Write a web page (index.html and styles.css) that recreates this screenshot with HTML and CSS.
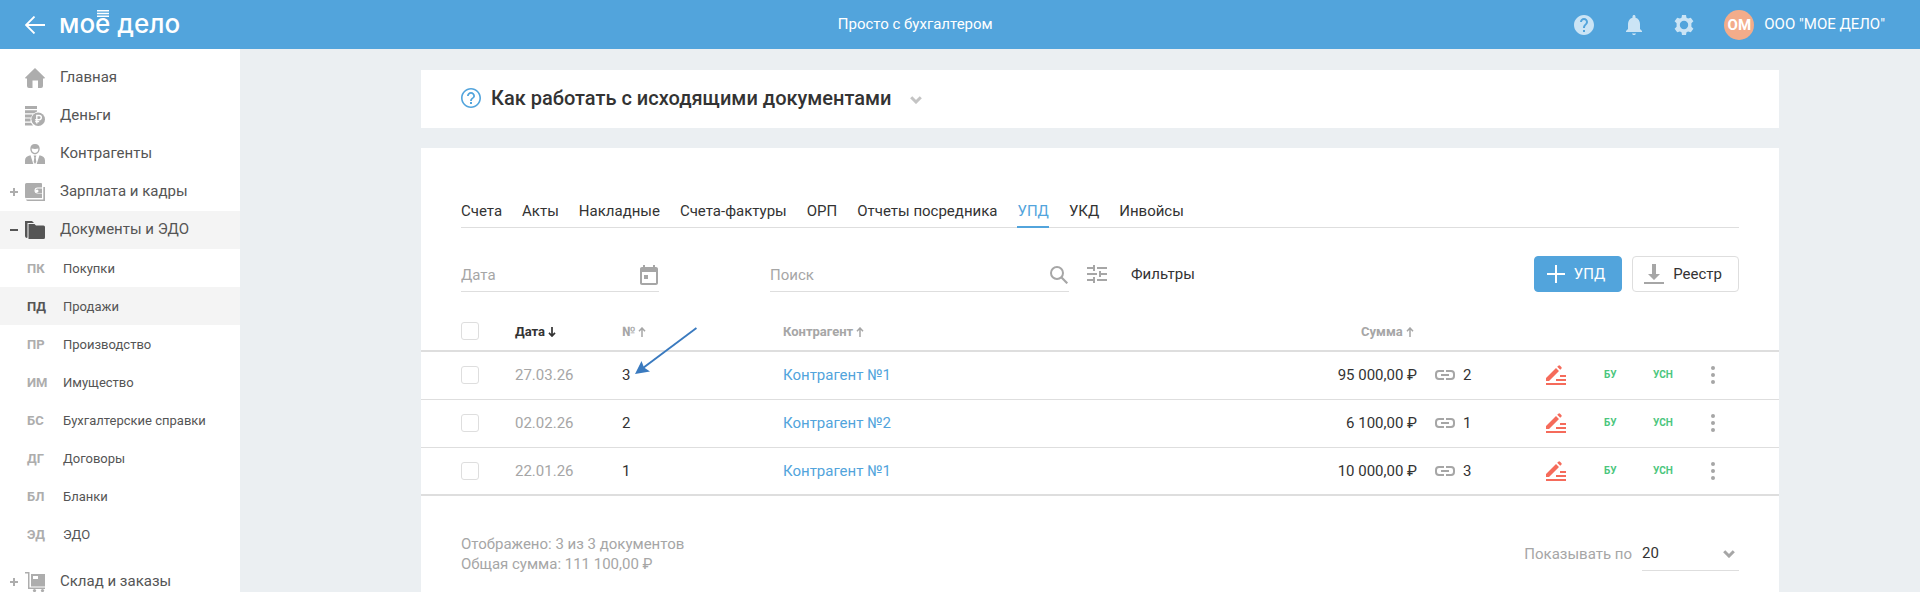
FILE: index.html
```html
<!DOCTYPE html>
<html lang="ru">
<head>
<meta charset="utf-8">
<meta name="viewport" content="width=device-width, initial-scale=1">
<title>Моё дело — УПД</title>
<link rel="stylesheet" href="styles.css">
</head>
<body>
<svg class="sprite" aria-hidden="true">
  <symbol id="i-link" viewBox="0 0 20 10"><path d="M9 1H4a3 3 0 0 0-3 3v2a3 3 0 0 0 3 3h5M11 1h5a3 3 0 0 1 3 3v2a3 3 0 0 1-3 3h-5M6 5h8" fill="none" stroke="currentColor" stroke-width="2"/></symbol>
  <symbol id="i-sign" viewBox="0 0 20 20"><path d="M0 18h20v2H0zM10 14h10v2H10zM14 10h6v2h-6zM0 13 10 3l3 3L3 16H0zM11.200 1.800 12.300.700q.9-.9 1.800 0l1.200 1.200q.9.9 0 1.800l-1.100 1.100z" fill="currentColor"/></symbol>
  <symbol id="i-dots" viewBox="0 0 4 18"><circle cx="2" cy="2" r="2"/><circle cx="2" cy="9" r="2"/><circle cx="2" cy="16" r="2"/></symbol>
  <symbol id="i-up" viewBox="0 0 8 10"><path d="M4 10V1M1 4.200 4 1l3 3.200" fill="none" stroke="currentColor" stroke-width="1.500"/></symbol>
  <symbol id="i-down" viewBox="0 0 8 10"><path d="M4 0v9M1 5.800 4 9l3-3.200" fill="none" stroke="currentColor" stroke-width="1.700"/></symbol>
  <symbol id="i-chevron" viewBox="0 0 12 8"><path d="M1.200 1.200 6 6l4.800-4.800" fill="none" stroke="currentColor" stroke-width="3"/></symbol>
</svg>

<header class="topbar">
  <button class="icon-btn back" type="button" aria-label="Назад"><svg width="20" height="18" viewBox="0 0 20 18"><path d="M20 9H1M9.500.500 1 9l8.500 8.500" fill="none" stroke="#fff" stroke-width="1.800"/></svg></button>
  <a class="logo" href="#" aria-label="Моё дело">мо<span class="logo-yo">е<svg class="logo-bars" width="12" height="7" viewBox="0 0 12 7"><path d="M0 0h12v1.500H0zM0 2.700h12v1.500H0zM0 5.400h12v1.500H0z" fill="#fff"/></svg></span> дело</a>
  <div class="plan">Просто с бухгалтером</div>
  <div class="tools">
    <button class="icon-btn" type="button" aria-label="Помощь"><svg width="20" height="20" viewBox="2 2 20 20"><path d="M12 2C6.480 2 2 6.480 2 12s4.480 10 10 10 10-4.480 10-10S17.520 2 12 2zm1 17h-2v-2h2v2zm2.070-7.750l-.9.920C13.450 12.900 13 13.500 13 15h-2v-.5c0-1.100.450-2.100 1.170-2.830l1.240-1.260c.370-.360.590-.860.590-1.410 0-1.100-.9-2-2-2s-2 .9-2 2H8c0-2.210 1.790-4 4-4s4 1.790 4 4c0 .880-.360 1.680-.930 2.250z"/></svg></button>
    <button class="icon-btn" type="button" aria-label="Уведомления"><svg width="20" height="20" viewBox="2 2 20 20"><path d="M12 22c1.100 0 2-.7 2-1.500h-4c0 .8.900 1.500 2 1.500zm6-6v-5c0-3.070-1.640-5.640-4.500-6.320V3.500c0-.830-.670-1.500-1.500-1.500s-1.500.670-1.500 1.500v1.180C7.630 5.360 6 7.920 6 11v5l-2 2v1h16v-1l-2-2z"/></svg></button>
    <button class="icon-btn" type="button" aria-label="Настройки"><svg width="20" height="20" viewBox="0 0 20 20"><path fill-rule="evenodd" d="M8 0h4l.5 2.700 1.600.9 2.700-.9 2.600 3.600L17.400 8.200v3.600l2 1.900-2.600 3.600-2.700-.9-1.600.9L12 20H8l-.5-2.700-1.600-.9-2.700.9L.600 13.700l2-1.900V8.200L.600 6.300l2.600-3.600 2.700.9 1.600-.9zM10 5.800a4.200 4.200 0 1 0 0 8.400 4.200 4.200 0 0 0 0-8.400z"/></svg></button>
    <button class="account" type="button"><span class="avatar">ОМ</span><span class="account-name">ООО "МОЕ ДЕЛО"</span></button>
  </div>
</header>

<div class="shell">
  <nav class="sidebar" aria-label="Разделы">
    <a class="nav-item" href="#"><span class="toggle"></span><svg width="20" height="20" viewBox="0 0 20 20"><path d="M10 0l10 9.800-.6.600H18V18q0 2-2 2h-3v-7.500H7.500V20H4q-2 0-2-2v-7.600H.600L0 9.800z"/></svg>Главная</a>
    <a class="nav-item" href="#"><span class="toggle"></span><svg width="20" height="20" viewBox="0 0 20 20"><path d="M0 0h12v3H0zM0 4.200h12V5.500L9 7.200H0zM0 8.400h7.500L6 11.400H0zM0 12.600h5.500v3H0zM0 16.800h6L8 19.600H0z"/><circle cx="13.200" cy="13.200" r="6.800"/><path d="M11.800 17.500V9.500h2.400a2 2 0 0 1 0 4.200h-4M10.200 15.600h4" fill="none" stroke="#fff" stroke-width="1.400"/></svg>Деньги</a>
    <a class="nav-item" href="#"><span class="toggle"></span><svg width="20" height="20" viewBox="0 0 20 20"><path fill-rule="evenodd" d="M10 0c3 0 4.700 2 4.700 4.800S12.800 10.300 10 10.300 5.300 7.800 5.300 4.800 7 0 10 0zM6.600 4.600c0 2.600 1.300 4.300 3.400 4.300s3.400-1.700 3.400-4.300c-2.300.5-4.500.5-6.800 0z"/><path d="M0 20v-3.500c0-3 2-4.600 5.500-5.200L8.300 20zM20 20v-3.500c0-3-2-4.600-5.500-5.200L11.700 20zM8.600 11.500h2.800L10.700 13.400 11.300 18 10 20 8.700 18l.6-4.600z"/></svg>Контрагенты</a>
    <a class="nav-item" href="#"><span class="toggle plus"></span><svg width="20" height="20" viewBox="0 0 20 20"><path fill-rule="evenodd" d="M1.500 1h14.500q1 0 1 1v3.500h-4.500q-3 0-3 3t3 3H17v4.500H1.500Q0 16.500 0 15V2.500Q0 1 1.500 1z"/><path fill-rule="evenodd" d="M12.500 6.500H17V11h-4.500q-2 0-2-2.200t2-2.300zM12 7.400a1.500 1.500 0 1 0 0 3 1.500 1.500 0 0 0 0-3z"/><path d="M18.300 5H20v14H3q-1.500 0-2-1.500h17.300z"/></svg>Зарплата и кадры</a>
    <a class="nav-item active" href="#"><span class="toggle minus"></span><svg width="20" height="20" viewBox="0 0 20 20"><path d="M0 1h7l2 2H2.500v14.500L1.500 18Q0 17.500 0 16z"/><path d="M3.500 4H9.500L11 5.500h7.500q1.500 0 1.500 1.500v10.500q0 1.500-1.500 1.500H3.500z"/></svg>Документы и ЭДО</a>
    <div class="subnav">
      <a class="sub-item" href="#"><b>ПК</b>Покупки</a>
      <a class="sub-item active" href="#"><b>ПД</b>Продажи</a>
      <a class="sub-item" href="#"><b>ПР</b>Производство</a>
      <a class="sub-item" href="#"><b>ИМ</b>Имущество</a>
      <a class="sub-item" href="#"><b>БС</b>Бухгалтерские справки</a>
      <a class="sub-item" href="#"><b>ДГ</b>Договоры</a>
      <a class="sub-item" href="#"><b>БЛ</b>Бланки</a>
      <a class="sub-item" href="#"><b>ЭД</b>ЭДО</a>
    </div>
    <a class="nav-item" href="#"><span class="toggle plus"></span><svg width="20" height="20" viewBox="0 0 20 20"><path d="M0 0h4.500v15.500H20V17H3V1.500H0z"/><path fill-rule="evenodd" d="M6 2h14v12.500H6zM8 4v3h5V4z"/><circle cx="9.500" cy="18.500" r="1.600"/><circle cx="17.500" cy="18.500" r="1.600"/></svg>Склад и заказы</a>
  </nav>

  <main class="content">
    <section class="card guide">
      <svg class="guide-icon" width="20" height="20" viewBox="2 2 20 20"><path d="M11 18h2v-2h-2v2zm1-16C6.480 2 2 6.480 2 12s4.480 10 10 10 10-4.480 10-10S17.520 2 12 2zm0 18.400c-4.600 0-8.400-3.800-8.400-8.400S7.400 3.600 12 3.600s8.400 3.800 8.400 8.400-3.800 8.400-8.400 8.400zM12 6c-2.210 0-4 1.790-4 4h1.800c0-1.200 1-2.200 2.200-2.200s2.200 1 2.200 2.200c0 2-3.100 1.750-3.100 5h1.800c0-2.250 3.100-2.500 3.100-5 0-2.210-1.790-4-4-4z"/></svg>
      <h1>Как работать с исходящими документами</h1>
      <button class="icon-btn guide-toggle" type="button" aria-label="Развернуть"><svg width="12" height="8"><use href="#i-chevron"/></svg></button>
    </section>

    <section class="card documents">
      <nav class="tabs" aria-label="Типы документов">
        <a href="#">Счета</a><a href="#">Акты</a><a href="#">Накладные</a><a href="#">Счета-фактуры</a><a href="#">ОРП</a><a href="#">Отчеты посредника</a><a class="current" href="#" aria-current="page">УПД</a><a href="#">УКД</a><a href="#">Инвойсы</a>
      </nav>

      <div class="toolbar">
        <label class="field date-field"><input type="text" placeholder="Дата" aria-label="Дата"><svg width="18" height="20" viewBox="3 1 18 20"><path d="M19 3h-1V1h-2v2H8V1H6v2H5c-1.110 0-2 .9-2 2v14c0 1.100.890 2 2 2h14c1.100 0 2-.9 2-2V5c0-1.100-.9-2-2-2zm0 16H5V8h14v11zM7 11h4v4H7z"/></svg></label>
        <label class="field search-field"><input type="text" placeholder="Поиск" aria-label="Поиск"><svg width="18" height="18" viewBox="0 0 18 18"><circle cx="7" cy="7" r="6" fill="none" stroke="currentColor" stroke-width="2"/><path d="M11.300 11.300l6 6" fill="none" stroke="currentColor" stroke-width="2.200"/></svg></label>
        <button class="filters" type="button"><svg width="20" height="18" viewBox="0 0 20 18"><path d="M0 3h7M7 0v6M10 3h10M0 9h10M13 6v6M13 9h7M0 15h7M7 12v6M10 15h10" fill="none" stroke="currentColor" stroke-width="2"/></svg>Фильтры</button>
        <button class="btn primary" type="button"><svg width="18" height="18" viewBox="0 0 18 18"><path d="M8 0h2v18H8zM0 8h18v2H0z" fill="#fff"/></svg>УПД</button>
        <button class="btn" type="button"><svg width="20" height="20" viewBox="0 0 20 20"><path d="M8 0h4v10h4l-6 6-6-6h4zM0 18h20v2H0z"/></svg>Реестр</button>
      </div>

      <table class="grid">
        <colgroup><col class="c-check"><col class="c-date"><col class="c-num"><col><col class="c-sum"><col class="c-link"><col class="c-sign"><col class="c-bu"><col class="c-usn"><col class="c-menu"></colgroup>
        <thead>
          <tr>
            <th><input type="checkbox" aria-label="Выбрать все"></th>
            <th class="sorted">Дата <svg width="8" height="10"><use href="#i-down"/></svg></th>
            <th>№ <svg width="8" height="10"><use href="#i-up"/></svg></th>
            <th>Контрагент <svg width="8" height="10"><use href="#i-up"/></svg></th>
            <th class="sum">Сумма <svg width="8" height="10"><use href="#i-up"/></svg></th>
            <th></th><th></th><th></th><th></th><th></th>
          </tr>
        </thead>
        <tbody>
          <tr>
            <td><input type="checkbox" aria-label="Выбрать документ 3"></td><td class="date">27.03.26</td>
            <td class="num">3<svg class="pointer" width="62" height="48" viewBox="0 0 62 48"><path d="M61.500 1 8 41" fill="none" stroke="#3a7abf" stroke-width="2"/><path d="M0 47 6.500 34 9 40.500 15 44.500z" fill="#3a7abf"/></svg></td>
            <td><a href="#">Контрагент №1</a></td><td class="sum">95 000,00 ₽</td>
            <td class="linked"><svg width="20" height="10"><use href="#i-link"/></svg>2</td><td class="sign"><svg width="20" height="20"><use href="#i-sign"/></svg></td><td class="tag">БУ</td><td class="tag">УСН</td>
            <td><button class="icon-btn menu" type="button" aria-label="Действия"><svg width="4" height="18"><use href="#i-dots"/></svg></button></td>
          </tr>
          <tr>
            <td><input type="checkbox" aria-label="Выбрать документ 2"></td><td class="date">02.02.26</td><td class="num">2</td>
            <td><a href="#">Контрагент №2</a></td><td class="sum">6 100,00 ₽</td>
            <td class="linked"><svg width="20" height="10"><use href="#i-link"/></svg>1</td><td class="sign"><svg width="20" height="20"><use href="#i-sign"/></svg></td><td class="tag">БУ</td><td class="tag">УСН</td>
            <td><button class="icon-btn menu" type="button" aria-label="Действия"><svg width="4" height="18"><use href="#i-dots"/></svg></button></td>
          </tr>
          <tr>
            <td><input type="checkbox" aria-label="Выбрать документ 1"></td><td class="date">22.01.26</td><td class="num">1</td>
            <td><a href="#">Контрагент №1</a></td><td class="sum">10 000,00 ₽</td>
            <td class="linked"><svg width="20" height="10"><use href="#i-link"/></svg>3</td><td class="sign"><svg width="20" height="20"><use href="#i-sign"/></svg></td><td class="tag">БУ</td><td class="tag">УСН</td>
            <td><button class="icon-btn menu" type="button" aria-label="Действия"><svg width="4" height="18"><use href="#i-dots"/></svg></button></td>
          </tr>
        </tbody>
      </table>

      <footer class="summary">
        <div class="totals"><div>Отображено: 3 из 3 документов</div><div>Общая сумма: 111 100,00 ₽</div></div>
        <div class="pager"><label for="page-size">Показывать по</label>
          <span class="select"><select id="page-size"><option>20</option><option>50</option><option>100</option></select><svg width="12" height="8"><use href="#i-chevron"/></svg></span>
        </div>
      </footer>
    </section>
  </main>
</div>
</body>
</html>
```
FILE: styles.css
```css
* { box-sizing: border-box; }
body {
  margin: 0;
  height: 100vh;
  display: flex;
  flex-direction: column;
  overflow: hidden;
  background: #ebeff2;
  color: #333;
  font: 15px/20px Roboto, "Open Sans", sans-serif;
}
a { color: inherit; text-decoration: none; }
svg { flex: none; display: block; fill: currentColor; }
button, input, select { font: inherit; color: inherit; }
.sprite { position: absolute; width: 0; height: 0; }
.icon-btn { display: block; padding: 0; border: 0; background: none; cursor: pointer; }

/* Top bar */
.topbar {
  flex: none;
  height: 49px;
  padding: 0 35px 0 25px;
  display: flex;
  align-items: center;
  background: #52a4dc;
  color: #fff;
}
.logo { margin-left: 14px; padding-bottom: 2px; font: 500 26px/46px Inter, "Open Sans", sans-serif; white-space: nowrap; }
.logo-yo { position: relative; }
.logo-bars { position: absolute; left: 2px; top: 2px; }
.plan { flex: 1; padding: 0 0 2px 76px; text-align: center; }
.tools { display: flex; align-items: center; gap: 30px; }
.tools .icon-btn { color: #cbe4f5; }
.account {
  display: flex;
  align-items: center;
  gap: 10px;
  padding: 0;
  border: 0;
  background: none;
  white-space: nowrap;
}
.account-name { padding-bottom: 2px; }
.avatar {
  width: 30px;
  border-radius: 50%;
  background: #f3ac8a;
  font-weight: 700;
  line-height: 30px;
  text-align: center;
}

/* Sidebar */
.shell { flex: 1; display: flex; min-height: 0; }
.sidebar { flex: none; width: 240px; padding-top: 10px; overflow: hidden; background: #fff; color: #555; }
.nav-item { display: flex; align-items: center; height: 38px; padding: 0 0 2px 10px; color: #555; }
.nav-item svg { margin: 2px 15px 0 0; color: #adadad; }
.toggle { position: relative; width: 15px; height: 8px; margin-top: 2px; flex: none; color: #adadad; }
.plus::before, .minus::before, .plus::after { content: ""; position: absolute; background: currentColor; }
.plus::before, .minus::before { left: 0; top: 3px; width: 8px; height: 2px; }
.plus::after { left: 3px; top: 0; width: 2px; height: 8px; }
.active { background: #f4f4f4; }
.active svg, .active .toggle { color: #555; }
.subnav { padding-bottom: 10px; }
.sub-item { display: flex; height: 38px; padding-left: 27px; font-size: 13px; line-height: 40px; }
.sub-item b { width: 36px; color: #adadad; }
.sub-item.active b { color: #555; }

/* Content */
.content {
  flex: 1;
  min-width: 0;
  padding: 21px 0 0 40px;
  display: flex;
  flex-direction: column;
  align-items: center;
  gap: 20px;
}
.card { width: 100%; max-width: 1358px; background: #fff; }
.guide { flex: none; display: flex; align-items: center; padding: 16px 40px 18px; }
.guide-icon { color: #52a4dc; }
.guide h1 { margin: 0 18px 0 10px; font-size: 20px; line-height: 24px; font-weight: 500; }
.guide-toggle { padding-top: 4px; color: #c4c4c4; }
.documents { flex: 1 0 auto; padding-top: 52px; }

.tabs { display: flex; gap: 20px; margin: 0 40px; border-bottom: 1px solid #dedede; }
.tabs a { height: 28px; margin-bottom: -1px; line-height: 22px; }
.tabs .current { color: #52a4dc; border-bottom: 2px solid #52a4dc; }

.toolbar { display: flex; align-items: center; padding: 28px 40px 0; }
.field { display: flex; align-items: center; height: 36px; border-bottom: 1px solid #dedede; color: #a6a6a6; }
.field input { flex: 1; min-width: 0; height: 35px; padding: 2px 0 0; border: 0; outline: 0; background: none; color: #333; }
.field input::placeholder { color: #a6a6a6; opacity: 1; }
.field svg { margin: 2px 1px 0 0; }
.date-field { width: 198px; margin-right: 111px; }
.search-field { width: 299px; margin-right: 18px; }
.filters { display: flex; align-items: center; gap: 24px; margin-right: auto; padding: 0; border: 0; background: none; }
.filters svg, .btn svg { color: #a6a6a6; }
.btn {
  display: flex;
  align-items: center;
  gap: 9px;
  height: 36px;
  margin-left: 10px;
  padding: 0 16px 0 11px;
  border: 1px solid #dedede;
  border-radius: 4px;
  background: #fff;
}
.primary { padding: 0 16px 0 12px; border-color: #52a4dc; background: #52a4dc; color: #fff; }

/* Table */
.grid { width: 100%; margin-top: 16px; border-collapse: separate; border-spacing: 0; table-layout: fixed; }
.c-check { width: 94px; }
.c-date { width: 107px; }
.c-num { width: 161px; }
.c-sum { width: 140px; }
.c-link { width: 129px; }
.c-sign { width: 58px; }
.c-bu { width: 49px; }
.c-usn { width: 58px; }
.c-menu { width: 68px; }
.grid th, .grid td { padding: 0; text-align: left; white-space: nowrap; border-bottom: 1px solid #dedede; }
.grid th { height: 44px; padding-top: 5px; border-bottom-width: 2px; color: #a6a6a6; font-size: 13px; font-weight: 700; }
.grid th svg { display: inline-block; vertical-align: -1px; }
.grid td { height: 48px; padding-bottom: 1px; }
.grid tr:last-child td { padding-bottom: 0; border-bottom-width: 2px; }
.grid th:first-child, .grid td:first-child { padding-left: 40px; }
.grid th:first-child { padding-top: 4px; }
.grid .sorted { color: #333; }
.grid .sum { text-align: right; }
.grid th.sum { padding-right: 3px; }
.grid a { color: #52a4dc; }
.grid .date { color: #a6a6a6; }
.grid .num { position: relative; }
.pointer { position: absolute; left: 13px; bottom: 24px; }
.linked svg { display: inline-block; margin: 0 8px 0 18px; color: #a6a6a6; }
.sign { color: #f56b5b; }
.grid .tag { color: #4bc67d; font-size: 10px; font-weight: 700; }
.menu { color: #a6a6a6; }
input[type="checkbox"] {
  display: block;
  appearance: none;
  width: 18px;
  height: 18px;
  margin: 0;
  border: 1px solid #dedede;
  border-radius: 3px;
  background: #fff;
}

/* Footer */
.summary { display: flex; justify-content: space-between; align-items: flex-start; padding: 38px 40px 24px; color: #a6a6a6; }
.pager { display: flex; align-items: center; gap: 10px; padding-top: 2px; }
.select { position: relative; width: 97px; border-bottom: 1px solid #dedede; color: #a6a6a6; }
.select select { width: 100%; height: 34px; padding: 0; border: 0; outline: 0; appearance: none; background: none; color: #333; }
.select svg { position: absolute; right: 4px; top: 14px; pointer-events: none; }
```
